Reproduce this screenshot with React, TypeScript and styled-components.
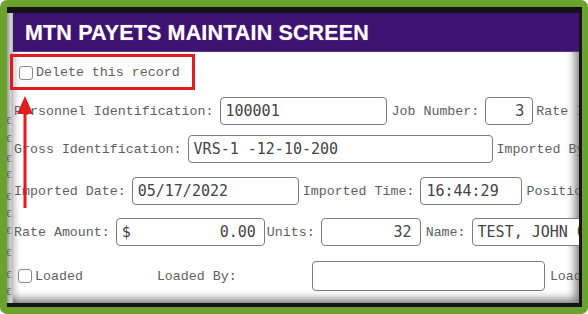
import React from 'react'
import styled, { createGlobalStyle } from 'styled-components'

const GlobalStyle = createGlobalStyle`
  html, body {
    margin: 0;
    padding: 0;
    background: #ffffff;
  }
  #root {
    width: 588px;
    height: 314px;
  }
`

type Field = {
  label?: string
  value?: string
  prefix?: string
  width?: number
  height?: number
  align?: 'left' | 'right'
  gap?: number
}

function SidebarMarks() {
  const marks = [104, 122, 142, 158, 180, 197, 214, 236, 258, 275]
  return (
    <Strip>
      {marks.map((top, i) => (
        <Mark key={i} style={{ top }}>€</Mark>
      ))}
    </Strip>
  )
}

function FieldRow({ fields, top }: { fields: Field[]; top: number }) {
  return (
    <Row $top={top}>
      {fields.map((f, i) => (
        <React.Fragment key={i}>
          {f.label && <Label $gap={f.gap ?? 0}>{f.label}</Label>}
          {f.width !== undefined && (
            <Input $width={f.width} $height={f.height ?? 28} $align={f.align ?? 'left'}>
              {f.prefix && <Prefix>{f.prefix}</Prefix>}
              <span>{f.value}</span>
            </Input>
          )}
        </React.Fragment>
      ))}
    </Row>
  )
}

function App() {
  return (
    <>
      <GlobalStyle />
      <Frame>
        <Window>
          <SidebarMarks />
          <Main>
            <Header>
              <Title>MTN PAYETS MAINTAIN SCREEN</Title>
            </Header>
            <Body>
              <CheckRow>
                <Check />
                <CheckLabel>Delete this record</CheckLabel>
              </CheckRow>
              <FieldRow
                top={10}
                fields={[
                  { label: 'Personnel Identification:', value: '100001', width: 167 },
                  { label: 'Job Number:', value: '3', width: 48, align: 'right', gap: 5 },
                  { label: 'Rate Info', gap: 3 },
                ]}
              />
              <FieldRow
                top={10}
                fields={[
                  { label: 'Gross Identification:', value: 'VRS-1 -12-10-200', width: 305 },
                  { label: 'Imported By', gap: 4 },
                ]}
              />
              <FieldRow
                top={14}
                fields={[
                  { label: 'Imported Date:', value: '05/17/2022', width: 167 },
                  { label: 'Imported Time:', value: '16:44:29', width: 102, gap: 4 },
                  { label: 'Positio', gap: 4 },
                ]}
              />
              <FieldRow
                top={13}
                fields={[
                  { label: 'Rate Amount:', value: '0.00', prefix: '$', width: 149, align: 'right' },
                  { label: 'Units:', value: '32', width: 100, align: 'right', gap: 2 },
                  { label: 'Name:', value: 'TEST, JOHN Q', width: 140, gap: 5 },
                ]}
              />
              <LoadedRow>
                <Check />
                <CheckLabel>Loaded</CheckLabel>
                <LoadedBy>Loaded By:</LoadedBy>
                <Input $width={233} $height={30} $align="left" />
                <Label $gap={5}>Load</Label>
              </LoadedRow>
            </Body>
          </Main>
        </Window>
        <Highlight />
        <Arrow width="16" height="112" viewBox="0 0 16 112">
          <polygon points="8,0 0,18 16,18" fill="#e01b22" />
          <rect x="6.5" y="16" width="3" height="96" fill="#e01b22" />
        </Arrow>
      </Frame>
    </>
  )
}

export default App

const Frame = styled.div`
  position: relative;
  width: 588px;
  height: 314px;
  box-sizing: border-box;
  padding: 7px 6px 7px 7px;
  background: #6ba22d;
  border-radius: 7px;
  overflow: hidden;
`

const Window = styled.div`
  display: flex;
  height: 100%;
  box-sizing: border-box;
  padding: 6px 3px 4px 0;
  background: #141414;
`

const Strip = styled.div`
  position: relative;
  width: 6px;
  flex-shrink: 0;
  background: linear-gradient(to right, #9a9a9a, #d2d2d2 60%, #b8b8b8);
  overflow: hidden;
`

const Mark = styled.span`
  position: absolute;
  left: -1px;
  font-family: 'DejaVu Sans', sans-serif;
  font-size: 9px;
  line-height: 9px;
  color: #5c6470;
`

const Main = styled.div`
  flex: 1;
  display: flex;
  flex-direction: column;
  min-width: 0;
`

const Header = styled.div`
  height: 39px;
  flex-shrink: 0;
  display: flex;
  align-items: center;
  padding-left: 12px;
  background: #3d1271;
  border-bottom: 1px solid #5a3a86;
  box-sizing: border-box;
`

const Title = styled.h1`
  margin: 2px 0 0 0;
  font-family: 'Liberation Sans', Arial, sans-serif;
  font-weight: 700;
  font-size: 21.5px;
  letter-spacing: 0.15px;
  color: #ffffff;
  text-shadow: 0 0 1px rgba(255, 200, 255, 0.6);
`

const Body = styled.div`
  flex: 1;
  display: flex;
  flex-direction: column;
  padding: 6px 0 0 1px;
  background: #ffffff;
  overflow: hidden;
  box-shadow: inset -9px -9px 9px -5px rgba(0, 0, 0, 0.5), inset 6px 0 6px -4px rgba(0, 0, 0, 0.25);
`

const CheckRow = styled.div`
  display: flex;
  align-items: center;
  height: 29px;
  padding-left: 5px;
`

const Check = styled.span`
  width: 12px;
  height: 12px;
  flex-shrink: 0;
  border: 1.5px solid #8a8a8a;
  border-radius: 3px;
  background: #ffffff;
`

const CheckLabel = styled.span`
  margin-left: 3px;
  font-family: 'Liberation Mono', 'Courier New', monospace;
  font-size: 13.3px;
  color: #606060;
  white-space: nowrap;
`

const Row = styled.div<{ $top: number }>`
  display: flex;
  align-items: center;
  margin-top: ${p => p.$top}px;
  white-space: nowrap;
`

const Label = styled.span<{ $gap: number }>`
  margin-left: ${p => p.$gap}px;
  margin-right: 6px;
  font-family: 'Liberation Mono', 'Courier New', monospace;
  font-size: 13.3px;
  color: #606060;
  white-space: nowrap;
  flex-shrink: 0;
`

const Input = styled.div<{ $width: number; $height: number; $align: 'left' | 'right' }>`
  width: ${p => p.$width}px;
  height: ${p => p.$height}px;
  flex-shrink: 0;
  box-sizing: border-box;
  display: flex;
  align-items: center;
  justify-content: ${p => (p.$align === 'right' ? 'flex-end' : 'flex-start')};
  padding: 0 ${p => (p.$align === 'right' ? '8px' : '5px')} 0 5px;
  border: 1.5px solid #7d7d7d;
  border-radius: 4px;
  background: #ffffff;
  font-family: 'DejaVu Sans Mono', monospace;
  font-size: 15px;
  color: #444444;
  white-space: nowrap;
  overflow: hidden;
  position: relative;
`

const Prefix = styled.span`
  position: absolute;
  left: 5px;
`

const LoadedRow = styled.div`
  display: flex;
  align-items: center;
  margin-top: 15px;
  padding-left: 4px;
  white-space: nowrap;
`

const LoadedBy = styled.span`
  margin-left: 74px;
  width: 155px;
  flex-shrink: 0;
  font-family: 'Liberation Mono', 'Courier New', monospace;
  font-size: 13.3px;
  color: #606060;
`

const Highlight = styled.div`
  position: absolute;
  left: 10px;
  top: 54px;
  width: 185px;
  height: 36px;
  box-sizing: border-box;
  border: 3px solid #e01b22;
`

const Arrow = styled.svg`
  position: absolute;
  left: 17px;
  top: 96px;
`
